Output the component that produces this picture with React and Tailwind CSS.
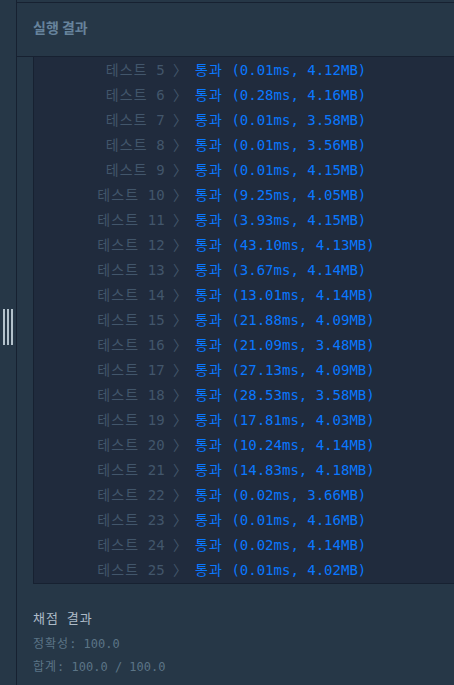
import React from "react";

const rows = [
  [5, "0.01ms, 4.12MB"],
  [6, "0.28ms, 4.16MB"],
  [7, "0.01ms, 3.58MB"],
  [8, "0.01ms, 3.56MB"],
  [9, "0.01ms, 4.15MB"],
  [10, "9.25ms, 4.05MB"],
  [11, "3.93ms, 4.15MB"],
  [12, "43.10ms, 4.13MB"],
  [13, "3.67ms, 4.14MB"],
  [14, "13.01ms, 4.14MB"],
  [15, "21.88ms, 4.09MB"],
  [16, "21.09ms, 3.48MB"],
  [17, "27.13ms, 4.09MB"],
  [18, "28.53ms, 3.58MB"],
  [19, "17.81ms, 4.03MB"],
  [20, "10.24ms, 4.14MB"],
  [21, "14.83ms, 4.18MB"],
  [22, "0.02ms, 3.66MB"],
  [23, "0.01ms, 4.16MB"],
  [24, "0.02ms, 4.14MB"],
  [25, "0.01ms, 4.02MB"],
];

const mono = "font-['DejaVu_Sans_Mono','Noto_Sans_CJK_KR',monospace]";

export default function App() {
  return (
    <div className="flex w-[454px] h-[685px] bg-[#263747] overflow-hidden">
      <div className="w-[17px] shrink-0 border-r border-[#172131] flex flex-col items-center pt-[309px]">
        <div className="flex gap-[2px]">
          <div className="w-[2px] h-[36px] bg-[#b4c2cc]" />
          <div className="w-[2px] h-[36px] bg-[#b4c2cc]" />
          <div className="w-[2px] h-[36px] bg-[#b4c2cc]" />
        </div>
      </div>
      <div className="flex-1 flex flex-col min-w-0">
        <div className="h-[2px] shrink-0" />
        <div className="h-[55px] shrink-0 border-y border-[#172131] flex items-center px-4 pb-[4px]">
          <span className="font-['Noto_Sans_CJK_KR',sans-serif] font-bold text-[14px] text-[#66839c]">
            실행 결과
          </span>
        </div>
        <div className={`ml-4 border-l border-b border-[#172131] bg-[#202b3d] pt-[1px] ${mono} text-[14px]`}>
          {rows.map(([n, r]) => (
            <div key={n} className="h-[25px] flex items-center whitespace-pre">
              <span className="w-[153px] text-right text-[#42566b]">
                <span className="tracking-[1.1px]">테스트</span>
                {` ${n} 〉`}
              </span>
              <span className="ml-[8px] text-[#0a78ff]">
                <span className="tracking-[1.1px]">통과</span>
                {` (${r})`}
              </span>
            </div>
          ))}
        </div>
        <div className={`px-4 pt-[25px] ${mono}`}>
          <div className="text-[13px] leading-[20px] text-[#aebbc7] mb-[4px]">
            <span className="tracking-[1px]">채점</span> <span className="tracking-[1px]">결과</span>
          </div>
          <div className="text-[12px] leading-[23px] text-[#5b7486] whitespace-pre">
            <span className="tracking-[1px]">정확성</span>: 100.0
          </div>
          <div className="text-[12px] leading-[23px] text-[#5b7486] whitespace-pre">
            <span className="tracking-[1px]">합계</span>: 100.0 / 100.0
          </div>
        </div>
      </div>
    </div>
  );
}
